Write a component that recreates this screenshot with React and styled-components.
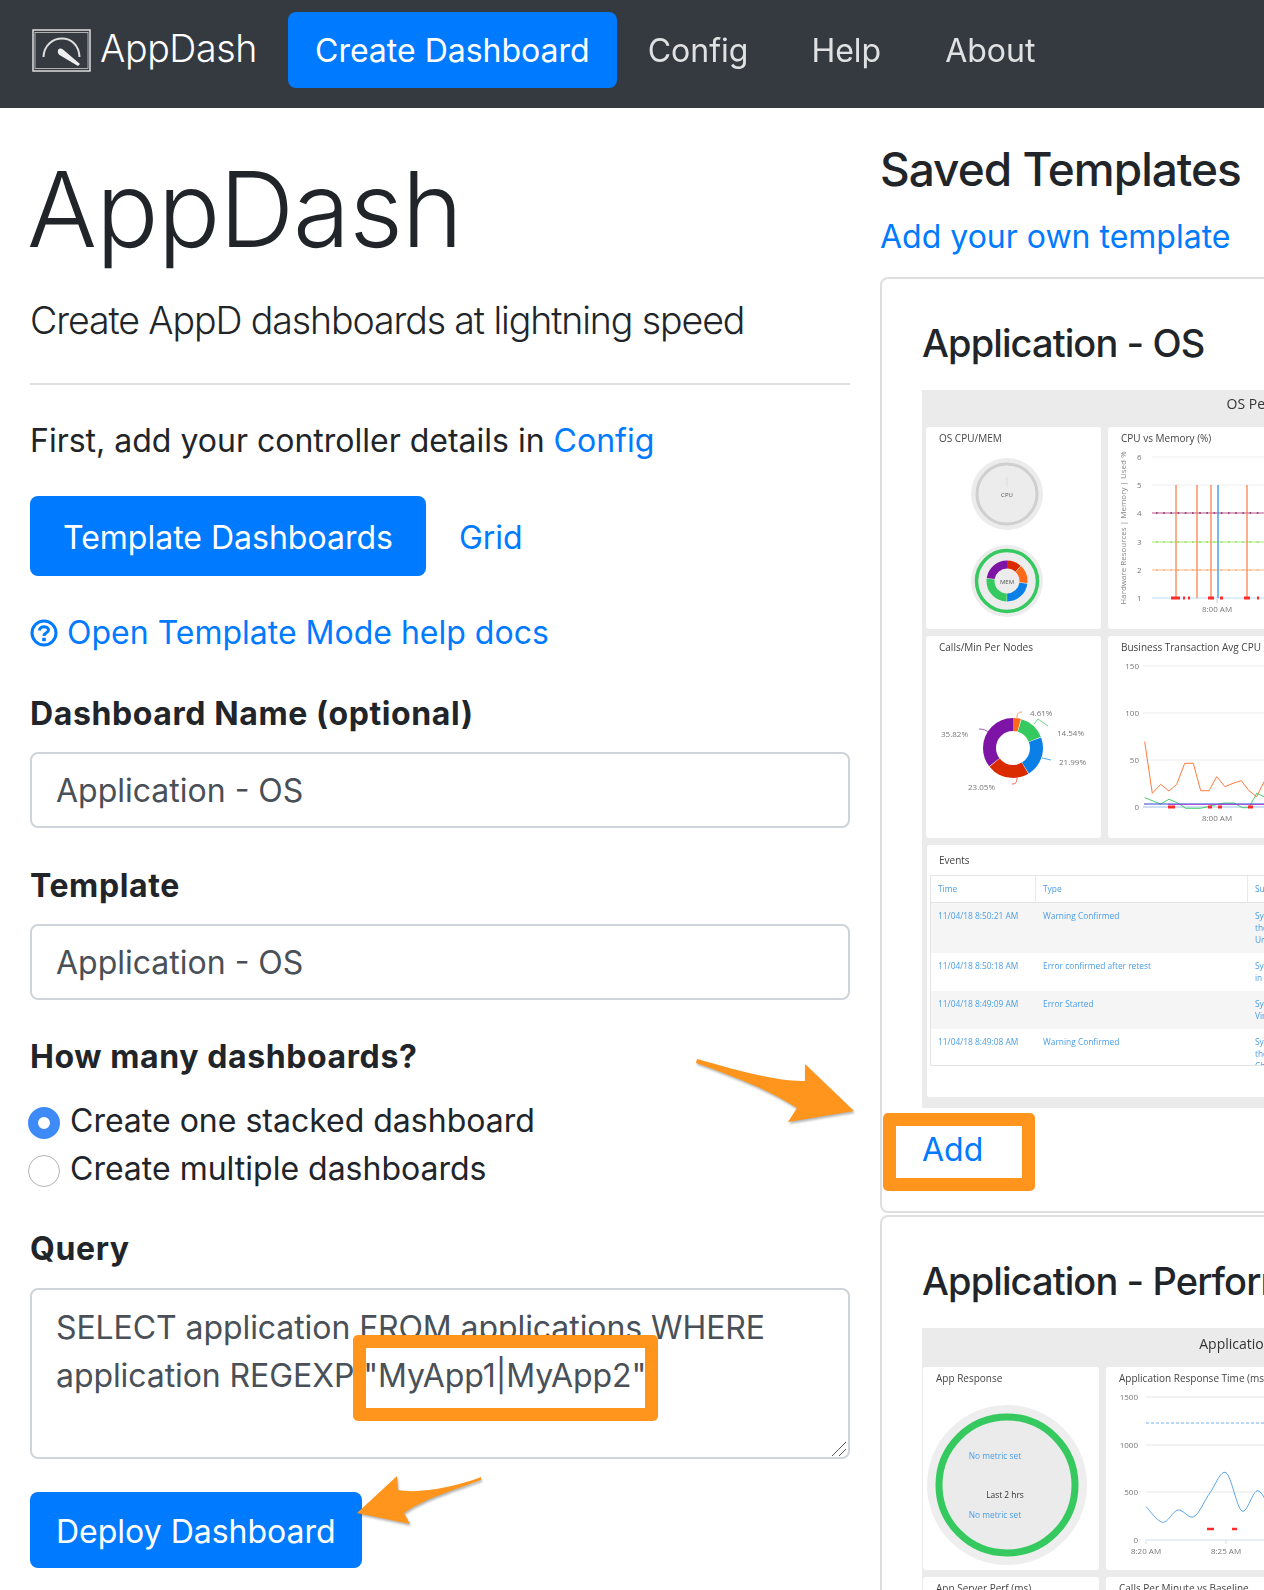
import styled, { createGlobalStyle } from "styled-components";

const GlobalStyle = createGlobalStyle`
  html, body {
    margin: 0;
    padding: 0;
    background: #fff;
    font-family: "Inter", "Liberation Sans", sans-serif;
    color: #212529;
  }
  * {
    box-sizing: border-box;
  }
`;

const blue = "#007bff";
const orange = "#ff951c";

const Page = styled.div`
  position: relative;
  width: 1264px;
  height: 1590px;
  overflow: hidden;
`;

const Navbar = styled.nav`
  display: flex;
  align-items: center;
  height: 108px;
  padding: 0 0 8px 32px;
  background: #343a40;
  color: #fff;
`;

const Brand = styled.div`
  display: flex;
  align-items: center;
  gap: 9px;
  width: 256px;
  font-size: 37.6px;
  font-weight: 300;
  letter-spacing: -0.4px;
  line-height: 46px;
  padding-bottom: 3px;
`;

const LogoBox = styled.span`
  display: flex;
  margin-top: 3px;
`;

const NavItem = styled.a`
  display: block;
  padding: 15px 27px 13px;
  margin-right: ${(props) => props.$gap || 0}px;
  border-radius: 8px;
  font-size: 32px;
  line-height: 48px;
  color: #fff;
  opacity: ${(props) => (props.$active ? 1 : 0.85)};
  background: ${(props) => (props.$active ? blue : "transparent")};
`;

const Columns = styled.div`
  display: flex;
`;

const LeftCol = styled.main`
  flex: none;
  width: 820px;
  margin-left: 30px;
  margin-right: 30px;
`;

const RightCol = styled.aside`
  flex: none;
  width: 384px;
  overflow: hidden;
`;

const Display = styled.h1`
  margin: 34px 0 15px -3px;
  font-size: 104px;
  line-height: 134px;
  font-weight: 300;
  letter-spacing: -1px;
`;

const Lead = styled.p`
  margin: 0;
  font-size: 37.5px;
  line-height: 60px;
  font-weight: 300;
  letter-spacing: -1.1px;
`;

const Rule = styled.hr`
  height: 2px;
  margin: 32px 0;
  border: 0;
  background: #dfdfdf;
`;

const BodyLine = styled.p`
  margin: 0;
  font-size: 32px;
  line-height: 48px;
`;

const Link = styled.a`
  color: ${blue};
`;

const ButtonRow = styled.div`
  display: flex;
  align-items: center;
  margin-top: 31px;
  font-size: 32px;
  line-height: 48px;
`;

const PrimaryButton = styled.button`
  display: block;
  padding: ${(props) => props.$py + 2}px ${(props) => props.$px}px ${(props) => props.$py - 2}px;
  margin-top: ${(props) => props.$top || 0}px;
  border: 0;
  border-radius: 8px;
  background: ${blue};
  color: #fff;
  font-family: inherit;
  font-size: 32px;
  line-height: 48px;
`;

const GridLink = styled(Link)`
  margin-left: 33px;
  padding-top: 3px;
`;

const HelpLine = styled.div`
  display: flex;
  align-items: center;
  gap: 9px;
  margin-top: 33px;
  font-size: 32px;
  line-height: 48px;
  color: ${blue};
`;

const Label = styled.label`
  display: block;
  margin-top: ${(props) => props.$top}px;
  padding-top: 1px;
  height: 48px;
  font-size: 32px;
  line-height: 48px;
  font-weight: 700;
  letter-spacing: 0.6px;
`;

const TextInput = styled.input`
  display: block;
  width: 100%;
  height: 76px;
  margin-top: 15px;
  padding: 1px 24px 0;
  border: 2px solid #ced4da;
  border-radius: 8px;
  color: #495057;
  font-family: inherit;
  font-size: 32px;
`;

const RadioRow = styled.label`
  display: flex;
  align-items: center;
  gap: 10px;
  margin-left: -2px;
  margin-top: ${(props) => props.$top || 0}px;
  font-size: 32px;
  line-height: 48px;
`;

const Radio = styled.input`
  appearance: none;
  flex: none;
  width: 32px;
  height: 32px;
  margin: 4px 0 0;
  border-radius: 50%;
  border: ${(props) => (props.checked ? "10.5px solid #3e8bf8" : "1.5px solid #b5b5b5")};
  background: #fff;
`;

const QueryWrap = styled.div`
  position: relative;
  margin-top: 16px;
  height: 171px;
`;

const QueryArea = styled.textarea`
  display: block;
  width: 100%;
  height: 100%;
  padding: 14px 24px;
  border: 2px solid #ced4da;
  border-radius: 8px;
  color: #495057;
  font-family: inherit;
  font-size: 32px;
  line-height: 48px;
  letter-spacing: -0.08px;
  outline: none;
  resize: none;
`;

const ResizeGrip = styled.svg`
  position: absolute;
  right: 3px;
  bottom: 2px;
`;

const Highlight = styled.div`
  position: absolute;
  left: ${(props) => props.$left}px;
  top: ${(props) => props.$top}px;
  width: ${(props) => props.$w}px;
  height: ${(props) => props.$h}px;
  border: 13.5px solid ${orange};
  border-radius: 5px;
  pointer-events: none;
`;

const Arrow = styled.svg`
  position: absolute;
  left: 0;
  top: 0;
  filter: drop-shadow(1px 2px 1px rgba(90, 90, 90, 0.45));
  pointer-events: none;
`;

const SideTitle = styled.h2`
  margin: 32px 0 15px;
  font-size: 46px;
  line-height: 58px;
  font-weight: 500;
  letter-spacing: -1px;
  white-space: nowrap;
`;

const SideLink = styled.a`
  display: block;
  font-size: 32px;
  line-height: 48px;
  color: ${blue};
  white-space: nowrap;
`;

const Card = styled.section`
  width: 780px;
  margin-top: ${(props) => props.$top}px;
  padding: 40px 39px 39px 40px;
  border: 2px solid #dfdfdf;
  border-radius: 8px;
  background: #fff;
`;

const CardTitle = styled.h3`
  margin: 0 0 23px;
  font-size: 38px;
  line-height: 48px;
  font-weight: 500;
  letter-spacing: -0.9px;
  white-space: nowrap;
`;

const Thumb = styled.div`
  width: 716px;
  height: 718px;
  background: #ebebeb;
  font-family: "Open Sans", sans-serif;
  filter: blur(0.35px);
  overflow: hidden;
`;

const ThumbTitle = styled.div`
  height: ${(props) => props.$h}px;
  padding-top: ${(props) => props.$h - 33}px;
  text-align: center;
  font-size: 14px;
  line-height: 20px;
  color: #333;
`;

const PanelGrid = styled.div`
  display: grid;
  grid-template-columns: ${(props) => props.$first}px 1fr;
  grid-auto-rows: ${(props) => props.$row}px;
  gap: 7px;
  padding-left: ${(props) => props.$left}px;
`;

const Panel = styled.div`
  background: #fff;
  border-radius: 3px;
  overflow: hidden;
`;

const PanelTitle = styled.div`
  height: 22px;
  padding: 4px 13px 0;
  font-size: 10px;
  line-height: 15px;
  color: #444;
  white-space: nowrap;
`;

const EventsPanel = styled.div`
  height: 252px;
  margin: 7px 0 0 5px;
  background: #fff;
  border-radius: 3px;
  overflow: hidden;
`;

const EventsTitle = styled.div`
  height: 30px;
  padding: 8px 12px 0;
  font-size: 10px;
  line-height: 14px;
  color: #444;
`;

const EventsTable = styled.div`
  height: 191px;
  margin-left: 3px;
  border: 1px solid #e4e4e4;
  overflow: hidden;
`;

const EventRow = styled.div`
  display: grid;
  grid-template-columns: 105px 212px 1fr;
  height: ${(props) => props.$h}px;
  background: ${(props) => (props.$shade ? "#f5f5f5" : "#fff")};
  border-bottom: ${(props) => (props.$head ? "1px solid #e4e4e4" : "0")};
  font-size: 8.4px;
  line-height: 12px;
  color: #4a9de8;
`;

const EventCell = styled.div`
  padding: 7px 7px 0;
  white-space: pre-line;
  border-right: ${(props) => (props.$head ? "1px solid #e9e9e9" : "0")};
`;

const AddWrap = styled.div`
  position: relative;
  margin-top: 16px;
  height: 48px;
  padding-top: 2px;
`;

const AddLink = styled.a`
  font-size: 32px;
  line-height: 48px;
  color: ${blue};
`;

const Chart = styled.svg`
  display: block;
  width: 100%;
  height: 180px;
  font-family: "Open Sans", sans-serif;
`;

const BlockChart = styled(Chart)`
  width: 176px;
`;

const axisText = { fontSize: 8, fill: "#777" };

const LogoMark = () => (
  <LogoBox>
    <svg width="59" height="43" viewBox="0 0 59 43" fill="none">
      <rect x="1" y="1" width="57" height="41" stroke="#e8e8e8" strokeWidth="1.4" />
      <rect x="3" y="3.5" width="53" height="36" stroke="#d0d0d0" strokeWidth="0.8" />
      <path d="M11.5 28 C12 16 21 9.5 30 9.5 C39 9.5 47 16 47.5 28" stroke="#ddd" strokeWidth="2" />
      <path d="M26 21 C27 19 29.5 19 31 20.5 L48 35 L46 37 L27.5 26 C26 25 25.5 23 26 21 Z" fill="#eee" />
    </svg>
  </LogoBox>
);

const HelpIcon = () => (
  <svg width="28" height="28" viewBox="0 0 28 28" fill="none" stroke={blue} strokeWidth="3">
    <circle cx="14" cy="14" r="12" />
    <path d="M9.5 11.5 C9.5 6.5 18.5 6.5 18.5 11 C18.5 14 14 13.5 14 17" />
    <rect x="12.2" y="18.8" width="3.6" height="3.4" fill={blue} stroke="none" />
  </svg>
);

const smoothPath = (points) => {
  let d = `M${points[0][0]} ${points[0][1]}`;
  for (let i = 0; i < points.length - 1; i++) {
    const p0 = points[i - 1] || points[i];
    const p1 = points[i];
    const p2 = points[i + 1];
    const p3 = points[i + 2] || p2;
    const c1x = p1[0] + (p2[0] - p0[0]) / 6;
    const c1y = p1[1] + (p2[1] - p0[1]) / 6;
    const c2x = p2[0] - (p3[0] - p1[0]) / 6;
    const c2y = p2[1] - (p3[1] - p1[1]) / 6;
    d += ` C${c1x} ${c1y} ${c2x} ${c2y} ${p2[0]} ${p2[1]}`;
  }
  return d;
};

const Donut = ({ cx, cy, r, width, slices }) => {
  const length = 2 * Math.PI * r;
  let offset = 0;
  return (
    <g transform={`rotate(-90 ${cx} ${cy})`} fill="none" strokeWidth={width}>
      {slices.map((slice) => {
        const size = (slice.value / 100) * length;
        const circle = (
          <circle
            key={slice.color}
            cx={cx}
            cy={cy}
            r={r}
            stroke={slice.color}
            strokeDasharray={`${size - 0.5} ${length - size + 0.5}`}
            strokeDashoffset={-offset}
          />
        );
        offset += size;
        return circle;
      })}
    </g>
  );
};

const GaugeChart = () => (
  <BlockChart viewBox="0 22 176 180">
    <circle cx="81" cy="67" r="36" fill="#ececec" />
    <circle cx="81" cy="67" r="30" fill="none" stroke="#cfcfcf" strokeWidth="3" />
    <path d="M81 50v10" stroke="#ddd" />
    <text x="81" y="70" textAnchor="middle" fontSize="6" fill="#555">CPU</text>
    <circle cx="81" cy="154" r="36" fill="#ececec" />
    <circle cx="81" cy="154" r="30.5" fill="none" stroke="#35c95f" strokeWidth="3.5" />
    <Donut
      cx={81}
      cy={154}
      r={16.5}
      width={8}
      slices={[
        { value: 12, color: "#d92a00" },
        { value: 15, color: "#ff6a1a" },
        { value: 23, color: "#0a7fe6" },
        { value: 27, color: "#35c95f" },
        { value: 23, color: "#7e14a6" },
      ]}
    />
    <text x="81" y="156.5" textAnchor="middle" fontSize="6" fill="#555">MEM</text>
  </BlockChart>
);

const markerLines = [
  [86, "#a8457f"],
  [115, "#9fe56b"],
  [143, "#ffb680"],
];

const CpuMemoryChart = () => (
  <Chart viewBox="0 22 560 180" preserveAspectRatio="xMinYMin slice">
    <text transform="translate(18 101) rotate(-90)" textAnchor="middle" style={{ fontSize: 8, fill: "#888" }}>
      Hardware Resources | Memory | Used %
    </text>
    {[[6, 30], [5, 58], [4, 86], [3, 115], [2, 143], [1, 171]].map(([n, y]) => (
      <text key={n} x="29" y={y + 3} style={axisText}>{n}</text>
    ))}
    <path d="M44 30H560M44 58H560" stroke="#eee" />
    {markerLines.map(([y, color]) => (
      <g key={y} stroke={color}>
        <path d={`M44 ${y}H560`} strokeWidth="0.9" />
        <path d={`M48 ${y}H560`} strokeWidth="2" strokeDasharray="1.6 5.6" />
      </g>
    ))}
    <path d="M44 171H560" stroke="#b5d8f7" strokeWidth="0.9" />
    <path d="M68 58V171M89 58V171M103 58V171M139 58V171" stroke="#ff6a2a" strokeWidth="1.1" />
    <path d="M110 58V171" stroke="#0a7fe6" strokeWidth="1.1" />
    <path d="M63 171H72M75 171H77M80 171H82M100 171H106M112 171H115M136 171H142M149 171H151" stroke="#ff2a2a" strokeWidth="3" />
    <path d="M109 172v4" stroke="#ccc" />
    <text x="109" y="185" textAnchor="middle" style={axisText}>8:00 AM</text>
  </Chart>
);

const NodesDonut = () => (
  <BlockChart viewBox="0 22 176 180">
    <Donut
      cx={87}
      cy={112}
      r={23.5}
      width={13}
      slices={[
        { value: 4.61, color: "#ff6a1a" },
        { value: 14.54, color: "#35c95f" },
        { value: 21.99, color: "#0a7fe6" },
        { value: 23.05, color: "#d92a00" },
        { value: 35.82, color: "#7e14a6" },
      ]}
    />
    <g fill="none" strokeWidth="0.7">
      <path d="M91 82 C91 78 92 76 96 76" stroke="#ff6a1a" />
      <path d="M108 88 L112 83 L122 90" stroke="#35c95f" />
      <path d="M116 122 L125 124" stroke="#0a7fe6" />
      <path d="M91 142 C91 146 90 148 86 148" stroke="#d92a00" />
      <path d="M62 96 C60 94 57 93 53 93" stroke="#7e14a6" />
    </g>
    <g style={axisText}>
      <text x="104" y="80">4.61%</text>
      <text x="131" y="100">14.54%</text>
      <text x="133" y="129">21.99%</text>
      <text x="42" y="154">23.05%</text>
      <text x="15" y="101">35.82%</text>
    </g>
  </BlockChart>
);

const orangeLine =
  "36.7,105.7 44.3,157.3 52.7,148.3 61,155 68.7,148.3 76.7,127.3 85.3,127.3 92.7,154.7 101,154.7 108.7,140.7 117,150.7 125,147.3 133.3,144.7 141,154.7 148.7,160.7 156,145.7";
const greenLine =
  "36.7,161.7 52.7,168 61,163.3 69.3,166.7 77.7,172.3 92.7,172.3 116,167 126,167 134.3,171.7 141,171.7 148.7,157.3 156,160.7";

const AvgCpuChart = () => (
  <Chart viewBox="0 22 560 180" preserveAspectRatio="xMinYMin slice">
    {[[150, 30], [100, 77], [50, 124], [0, 171]].map(([n, y]) => (
      <text key={n} x="31" y={y + 3} textAnchor="end" style={axisText}>{n}</text>
    ))}
    <path d="M35 30H560M35 77H560M35 124H560" stroke="#ececec" />
    <path d="M35 171H560" stroke="#cfdff2" strokeWidth="2" />
    <polyline points={orangeLine} fill="none" stroke="#ff7a3a" strokeWidth="1" />
    <polyline points={greenLine} fill="none" stroke="#35c95f" strokeWidth="0.9" />
    <path d="M36 168H156" stroke="#2b46d8" strokeWidth="1" />
    <path d="M60 168.5H156" stroke="#a93fd0" strokeWidth="0.8" />
    <path d="M60 171H67M100 171H104M110 171H114M140 171H145" stroke="#ff2a2a" strokeWidth="3" />
    <text x="109" y="185" textAnchor="middle" style={axisText}>8:00 AM</text>
  </Chart>
);

const AppGauge = () => (
  <BlockChart viewBox="0 22 176 180">
    <circle cx="84" cy="118" r="80" fill="#eeeeee" />
    <circle cx="84" cy="118" r="68" fill="#ebebeb" stroke="#35c95f" strokeWidth="7" />
    <text x="72" y="92" textAnchor="middle" fontSize="8.4" fill="#4a9de8">No metric set</text>
    <text x="82" y="131" textAnchor="middle" fontSize="8.4" fill="#333">Last 2 hrs</text>
    <text x="72" y="151" textAnchor="middle" fontSize="8.4" fill="#4a9de8">No metric set</text>
  </BlockChart>
);

const responseCurve = [
  [40, 139.7], [56.7, 155.3], [72, 143], [88, 149.7], [104, 125.7],
  [120, 105.7], [136, 144], [152, 123.7], [168, 150],
];

const ResponseChart = () => (
  <Chart viewBox="0 22 560 180" preserveAspectRatio="xMinYMin slice">
    {[[1500, 30], [1000, 78], [500, 125], [0, 173]].map(([n, y]) => (
      <text key={n} x="32" y={y + 3} textAnchor="end" style={axisText}>{n}</text>
    ))}
    <path d="M40 30H560M40 78H560M40 125H560" stroke="#e6e6e6" />
    <path d="M40 173H560" stroke="#cfdff2" />
    <path d="M40 173v4M120 173v4" stroke="#cfdff2" />
    <path d="M40 56H560" stroke="#4a9de8" strokeWidth="0.8" strokeDasharray="3 2" />
    <path d={smoothPath(responseCurve)} fill="none" stroke="#4a9de8" strokeWidth="0.9" />
    <path d="M101 162H108M126 162H131" stroke="#ff2a2a" strokeWidth="2.4" />
    <text x="40" y="187" textAnchor="middle" style={axisText}>8:20 AM</text>
    <text x="120" y="187" textAnchor="middle" style={axisText}>8:25 AM</text>
  </Chart>
);

const events = [
  { time: "11/04/18 8:50:21 AM", type: "Warning Confirmed", summary: "System memory\nthe warning for\nUnknown", h: 50, shade: true },
  { time: "11/04/18 8:50:18 AM", type: "Error confirmed after retest", summary: "System memory\nin error", h: 38 },
  { time: "11/04/18 8:49:09 AM", type: "Error Started", summary: "System memory\nVirtual", h: 38, shade: true },
  { time: "11/04/18 8:49:08 AM", type: "Warning Confirmed", summary: "System memory\nthe warning for\nCheck", h: 38 },
];

const OsCard = () => (
  <Card $top={16}>
    <CardTitle>Application - OS</CardTitle>
    <Thumb>
      <ThumbTitle $h={37}>OS Performance</ThumbTitle>
      <PanelGrid $first={175} $left={4} $row={202}>
        <Panel>
          <PanelTitle>OS CPU/MEM</PanelTitle>
          <GaugeChart />
        </Panel>
        <Panel>
          <PanelTitle>CPU vs Memory (%)</PanelTitle>
          <CpuMemoryChart />
        </Panel>
        <Panel>
          <PanelTitle>Calls/Min Per Nodes</PanelTitle>
          <NodesDonut />
        </Panel>
        <Panel>
          <PanelTitle>Business Transaction Avg CPU (%)</PanelTitle>
          <AvgCpuChart />
        </Panel>
      </PanelGrid>
      <EventsPanel>
        <EventsTitle>Events</EventsTitle>
        <EventsTable>
          <EventRow $h={27} $head>
            <EventCell $head>Time</EventCell>
            <EventCell $head>Type</EventCell>
            <EventCell>Summary</EventCell>
          </EventRow>
          {events.map((event) => (
            <EventRow key={event.time} $h={event.h} $shade={event.shade}>
              <EventCell>{event.time}</EventCell>
              <EventCell>{event.type}</EventCell>
              <EventCell>{event.summary}</EventCell>
            </EventRow>
          ))}
        </EventsTable>
      </EventsPanel>
    </Thumb>
    <AddWrap>
      <AddLink>Add</AddLink>
      <Highlight $left={-39} $top={-11} $w={152} $h={78} />
    </AddWrap>
  </Card>
);

const PerformanceCard = () => (
  <Card $top={2}>
    <CardTitle>Application - Performance</CardTitle>
    <Thumb>
      <ThumbTitle $h={39}>Application Performance</ThumbTitle>
      <PanelGrid $first={176} $left={1} $row={203}>
        <Panel>
          <PanelTitle>App Response</PanelTitle>
          <AppGauge />
        </Panel>
        <Panel>
          <PanelTitle>Application Response Time (ms)</PanelTitle>
          <ResponseChart />
        </Panel>
        <Panel>
          <PanelTitle>App Server Perf (ms)</PanelTitle>
        </Panel>
        <Panel>
          <PanelTitle>Calls Per Minute vs Baseline</PanelTitle>
        </Panel>
      </PanelGrid>
    </Thumb>
  </Card>
);

export default function App() {
  return (
    <Page>
      <GlobalStyle />
      <Navbar>
        <Brand>
          <LogoMark />
          AppDash
        </Brand>
        <NavItem $active $gap={4}>Create Dashboard</NavItem>
        <NavItem $gap={9}>Config</NavItem>
        <NavItem $gap={10}>Help</NavItem>
        <NavItem>About</NavItem>
      </Navbar>
      <Columns>
        <LeftCol>
          <Display>AppDash</Display>
          <Lead>Create AppD dashboards at lightning speed</Lead>
          <Rule />
          <BodyLine>
            First, add your controller details in <Link>Config</Link>
          </BodyLine>
          <ButtonRow>
            <PrimaryButton $py={16} $px={33}>Template Dashboards</PrimaryButton>
            <GridLink>Grid</GridLink>
          </ButtonRow>
          <HelpLine>
            <HelpIcon />
            Open Template Mode help docs
          </HelpLine>
          <Label $top={32}>Dashboard Name (optional)</Label>
          <TextInput readOnly value="Application - OS" />
          <Label $top={33}>Template</Label>
          <TextInput readOnly value="Application - OS" />
          <Label $top={32}>How many dashboards?</Label>
          <RadioRow $top={17}>
            <Radio type="radio" name="mode" checked readOnly />
            Create one stacked dashboard
          </RadioRow>
          <RadioRow>
            <Radio type="radio" name="mode" checked={false} readOnly />
            Create multiple dashboards
          </RadioRow>
          <Label $top={31}>Query</Label>
          <QueryWrap>
            <QueryArea
              readOnly
              defaultValue={'SELECT application FROM applications WHERE application REGEXP "MyApp1|MyApp2"'}
            />
            <ResizeGrip width="16" height="16" viewBox="0 0 16 16" fill="none" stroke="#555" strokeWidth="1">
              <path d="M1 15L15 1M8 15L15 8" />
            </ResizeGrip>
            <Highlight $left={323} $top={47} $w={305} $h={86} />
          </QueryWrap>
          <PrimaryButton $py={14} $px={26} $top={33}>Deploy Dashboard</PrimaryButton>
        </LeftCol>
        <RightCol>
          <SideTitle>Saved Templates</SideTitle>
          <SideLink>Add your own template</SideLink>
          <OsCard />
          <PerformanceCard />
        </RightCol>
      </Columns>
      <Arrow width="1264" height="1590" viewBox="0 0 1264 1590">
        <path
          d="M697 1059 C730 1068 775 1082 805 1081 L805 1064 L854 1111 L788 1122 L797 1108 C770 1090 730 1075 696 1063 Z"
          fill={orange}
        />
        <path
          d="M481 1477 C455 1487 420 1494 398 1490 L397 1476 L357 1513 L410 1524 L404 1513 C425 1498 460 1488 481 1480 Z"
          fill={orange}
        />
      </Arrow>
    </Page>
  );
}
